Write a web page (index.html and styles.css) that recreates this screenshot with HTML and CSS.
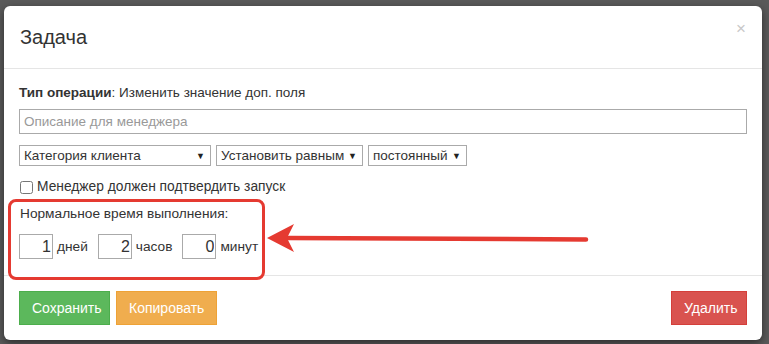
FILE: index.html
```html
<!DOCTYPE html>
<html lang="ru">
<head>
  <meta charset="UTF-8">
  <title>Задача</title>
  <link rel="stylesheet" href="styles.css">
</head>
<body>
  <div class="backdrop">
    <div class="modal">
      <div class="modal-header">
        <h4 class="modal-title">Задача</h4>
        <span class="close">&times;</span>
      </div>
      <div class="modal-body">
        <p class="op-type"><b>Тип операции</b>: Изменить значение доп. поля</p>
        <input type="text" class="text-input" placeholder="Описание для менеджера">
        <div class="selects">
          <div class="select select-field"><span>Категория клиента</span><span class="caret">&#9660;</span></div>
          <div class="select select-op"><span>Установить равным</span><span class="caret">&#9660;</span></div>
          <div class="select select-kind"><span>постоянный</span><span class="caret">&#9660;</span></div>
        </div>
        <label class="check"><input type="checkbox"> Менеджер должен подтвердить запуск</label>
        <div class="time-group">
          <div class="time-label">Нормальное время выполнения:</div>
          <div class="time-row">
            <input type="text" class="num" value="1"><span class="unit">дней</span>
            <input type="text" class="num" value="2"><span class="unit">часов</span>
            <input type="text" class="num" value="0"><span class="unit">минут</span>
          </div>
        </div>
      </div>
      <div class="modal-footer">
        <div class="left-buttons">
          <button class="btn btn-success">Сохранить</button>
          <button class="btn btn-warning">Копировать</button>
        </div>
        <button class="btn btn-danger">Удалить</button>
      </div>
    </div>

    <!-- annotation arrow -->
    <svg class="arrow" width="769" height="344" viewBox="0 0 769 344">
      <line x1="288" y1="238" x2="586" y2="239.5" stroke="#e53a31" stroke-width="4.5" stroke-linecap="round"/>
      <path d="M267 238 L294 224 L287 238 L294 252 Z" fill="#e53a31"/>
    </svg>
  </div>
</body>
</html>
```

FILE: styles.css
```css
body {
  margin: 0;
  background: #5a5a5a;
  font-family: "Liberation Sans", Arial, sans-serif;
  color: #333;
}
.backdrop {
  position: relative;
  height: 344px;
  padding: 6px 0 0 4px;
  box-sizing: border-box;
}
.modal {
  width: 758px;
  background: #fff;
  border-radius: 6px;
  box-shadow: 0 3px 9px rgba(0, 0, 0, 0.5);
}
.modal-header {
  display: flex;
  justify-content: space-between;
  align-items: flex-start;
  padding: 15px 16px 15px 16px;
  border-bottom: 1px solid #e5e5e5;
}
.modal-title {
  margin: 0;
  font-size: 20px;
  font-weight: normal;
  line-height: 32px;
}
.close {
  font-size: 17px;
  line-height: 16px;
  color: #c8c8c8;
}
.modal-body {
  padding: 15px 15px 0;
}
.op-type {
  margin: 0;
  font-size: 13.5px;
  line-height: 18px;
}
.text-input {
  display: block;
  width: 100%;
  height: 25px;
  margin-top: 7px;
  padding: 0 4px;
  box-sizing: border-box;
  border: 1px solid #aaa;
  border-radius: 0;
  font-family: inherit;
  font-size: 13.5px;
  color: #333;
}
.text-input::placeholder {
  color: #999;
}
.selects {
  display: flex;
  gap: 5px;
  margin-top: 11px;
}
.select {
  display: flex;
  justify-content: space-between;
  align-items: center;
  height: 21px;
  padding: 0 5px 0 4px;
  box-sizing: border-box;
  border: 1px solid #aaa;
  font-size: 13.5px;
  white-space: nowrap;
}
.select-field { width: 192px; }
.select-op { width: 147px; }
.select-kind { width: 99px; }
.caret {
  font-size: 9px;
  color: #222;
}
.check {
  display: flex;
  align-items: center;
  margin-top: 12px;
  font-size: 13.8px;
  line-height: 18px;
}
.check input {
  width: 13px;
  height: 13px;
  margin: 0 4px 0 1px;
}
.time-group {
  position: relative;
  z-index: 1;
  width: 257px;
  margin: 3px 0 -5px -11px;
  padding: 3px 9px 18px;
  box-sizing: border-box;
  border: 3px solid #e53a31;
  border-radius: 8px;
  background: #fff;
}
.time-label {
  font-size: 13.7px;
  line-height: 18px;
}
.time-row {
  display: flex;
  align-items: center;
  margin-top: 11px;
  margin-left: -1px;
  font-size: 13.7px;
}
.num {
  width: 34px;
  height: 25px;
  padding: 0 1px;
  box-sizing: border-box;
  border: 1px solid #aaa;
  border-radius: 0;
  font-family: inherit;
  font-size: 16px;
  text-align: right;
  color: #333;
}
.unit {
  margin: 0 10px 0 4px;
}
.modal-footer {
  display: flex;
  justify-content: space-between;
  padding: 15px;
  border-top: 1px solid #e5e5e5;
}
.left-buttons {
  display: flex;
  gap: 6px;
}
.btn {
  height: 34px;
  padding: 0 12px;
  border: 1px solid transparent;
  border-radius: 0;
  font-family: inherit;
  font-size: 14px;
  color: #fff;
}
.btn-success { background: #5cb85c; border-color: #4cae4c; width: 91px; }
.btn-warning { background: #f0ad4e; border-color: #eea236; width: 101px; }
.btn-danger { background: #d9534f; border-color: #d43f3a; width: 76px; }
.arrow {
  position: absolute;
  top: 0;
  left: 0;
  z-index: 2;
}
```
